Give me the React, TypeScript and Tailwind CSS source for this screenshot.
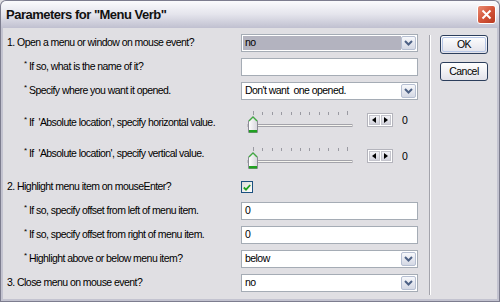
import React from 'react';

const Chevron = () => (
  <svg width="9" height="6" viewBox="0 0 9 6">
    <path d="M1 1 L4.5 4.5 L8 1" stroke="#4d6185" strokeWidth="2" fill="none" />
  </svg>
);

const Select = ({ value, focused }: { value: string; focused?: boolean }) => (
  <div className="w-[177px] h-[18px] border border-[#a5acb5] bg-white flex p-[1px]">
    <div className={`flex-1 flex items-center pl-[2px] whitespace-pre ${focused ? 'bg-[#b3b3bf]' : ''}`}>{value}</div>
    <div className="w-[15px] h-[14px] border border-[#b6bfd2] rounded-[2px] bg-gradient-to-b from-[#f7f8fb] to-[#d4d8e4] flex items-center justify-center">
      <Chevron />
    </div>
  </div>
);

const TextInput = ({ value = '' }: { value?: string }) => (
  <div className="w-[177px] h-[18px] border border-[#a5acb5] bg-white flex items-center pl-[3px]">{value}</div>
);

const Slider = () => {
  const ticks = Array.from({ length: 11 }, (_, i) => 12 + i * 9.4);
  return (
    <div className="flex items-start">
      <svg width="112" height="26" viewBox="0 0 112 26">
        {ticks.map((x, i) => (
          <line
            key={i}
            x1={Math.round(x) + 0.5}
            x2={Math.round(x) + 0.5}
            y1={i === 0 || i === 10 ? 3 : 4}
            y2={7}
            stroke="#9a9aa2"
          />
        ))}
        <rect x="7" y="16.5" width="104" height="2" fill="#f6f5ef" stroke="#a3a3aa" strokeWidth="1" />
        <defs>
          <linearGradient id="thumb" x1="0" y1="0" x2="1" y2="0">
            <stop offset="0" stopColor="#ffffff" />
            <stop offset="1" stopColor="#d6d6dc" />
          </linearGradient>
        </defs>
        <path d="M7.5 13 L12 8.5 L16.5 13 L16.5 24.5 L7.5 24.5 Z" fill="url(#thumb)" stroke="#8c8c96" />
        <path d="M8 13 L12 9 L16 13" fill="none" stroke="#3fae3f" strokeWidth="1.2" />
        <rect x="8" y="22" width="8" height="2.5" fill="#21a121" />
      </svg>
      <div className="ml-[14px] mt-[5px] w-[26px] h-[14px] border border-[#b4b4bc] bg-white flex p-[1px] gap-[1px]">
        <div className="flex-1 bg-gradient-to-b from-[#f2f2f6] to-[#d2d2dc] border border-[#c4c4cc] flex items-center justify-center">
          <svg width="4" height="6" viewBox="0 0 4 6"><path d="M4 0 L0 3 L4 6 Z" fill="#000" /></svg>
        </div>
        <div className="flex-1 bg-gradient-to-b from-[#f2f2f6] to-[#d2d2dc] border border-[#c4c4cc] flex items-center justify-center">
          <svg width="4" height="6" viewBox="0 0 4 6"><path d="M0 0 L4 3 L0 6 Z" fill="#000" /></svg>
        </div>
      </div>
      <span className="ml-[9px] mt-[5px] leading-[14px]">0</span>
    </div>
  );
};

const Sub = ({ children }: { children: React.ReactNode }) => (
  <span className="pl-[21px] whitespace-pre">
    <span className="text-[8px] align-top leading-[10px]">*</span> {children}
  </span>
);

const Check = () => (
  <div className="w-[12px] h-[12px] border border-[#1c5180] bg-gradient-to-br from-[#dcdcd8] to-white flex items-center justify-center">
    <svg width="8" height="7" viewBox="0 0 8 7">
      <path d="M0.8 3.5 L3 5.6 L7.2 1" stroke="#21a121" strokeWidth="1.8" fill="none" />
    </svg>
  </div>
);

const XpButton = ({ label, isDefault }: { label: string; isDefault?: boolean }) => (
  <div className="w-[48px] h-[19px] rounded-[3px] border border-[#2c3e5c] bg-gradient-to-b from-white to-[#e2e2ea] p-[1px]">
    <div
      className={`w-full h-full rounded-[2px] flex items-center justify-center ${
        isDefault ? 'border border-[#b6c6e6]' : ''
      }`}
    >
      {label}
    </div>
  </div>
);

export default function App() {
  return (
    <div className="w-[500px] h-[302px] flex flex-col bg-[#e0dfe3] text-[10.5px] tracking-[-0.55px] text-black font-['Liberation_Sans',Arial,sans-serif] overflow-hidden">
      {/* Title bar */}
      <div className="h-[28px] shrink-0 rounded-t-[6px] border border-b-0 border-[#7d7d8f] bg-gradient-to-b from-[#fbfbfd] via-[#e4e4ec] to-[#c0c0d0] flex items-center justify-between pl-[5px] pr-[3px]">
        <span className="text-[13px] font-bold tracking-[-0.5px] text-[#111]">Parameters for "Menu Verb"</span>
        <div className="w-[19px] h-[19px] rounded-[3px] border border-white bg-gradient-to-br from-[#e88b72] via-[#d4553a] to-[#b8391f] flex items-center justify-center">
          <svg width="11" height="11" viewBox="0 0 11 11">
            <path d="M1.5 1.5 L9.5 9.5 M9.5 1.5 L1.5 9.5" stroke="#fff" strokeWidth="2" />
          </svg>
        </div>
      </div>

      {/* Body */}
      <div className="flex-1 flex border-x border-b border-[#7d7d8f]">
        <div className="flex-1 flex border-x-2 border-b-2 border-[#c3c3d0]">
          {/* Form */}
          <div className="flex flex-col pt-[3px]">
            <div className="h-[24px] flex items-center">
              <span className="w-[238px] pl-[4px]">1. Open a menu or window on mouse event?</span>
              <Select value="no" focused />
            </div>
            <div className="h-[24px] flex items-center">
              <span className="w-[238px]"><Sub>If so, what is the name of it?</Sub></span>
              <TextInput />
            </div>
            <div className="h-[24px] flex items-center">
              <span className="w-[238px]"><Sub>Specify where you want it opened.</Sub></span>
              <Select value="Don't want  one opened." />
            </div>
            <div className="h-[40px] flex items-center">
              <span className="w-[238px]"><Sub>If  'Absolute location', specify horizontal value.</Sub></span>
              <div className="self-start mt-[5px]">
                <Slider />
              </div>
            </div>
            <div className="h-[32px] flex items-start">
              <span className="w-[238px] h-[22px] flex items-center"><Sub>If  'Absolute location', specify vertical value.</Sub></span>
              <div className="mt-[1px]">
                <Slider />
              </div>
            </div>
            <div className="h-[24px] flex items-center">
              <span className="w-[238px] pl-[4px]">2. Highlight menu item on mouseEnter?</span>
              <Check />
            </div>
            <div className="h-[24px] flex items-center">
              <span className="w-[238px]"><Sub>If so, specify offset from left of menu item.</Sub></span>
              <TextInput value="0" />
            </div>
            <div className="h-[24px] flex items-center">
              <span className="w-[238px]"><Sub>If so, specify offset from right of menu item.</Sub></span>
              <TextInput value="0" />
            </div>
            <div className="h-[24px] flex items-center">
              <span className="w-[238px]"><Sub>Highlight above or below menu item?</Sub></span>
              <Select value="below" />
            </div>
            <div className="h-[24px] flex items-center">
              <span className="w-[238px] pl-[4px]">3. Close menu on mouse event?</span>
              <Select value="no" />
            </div>
          </div>

          {/* Separator */}
          <div className="ml-[11px] mt-[7px] w-[2px] h-[260px] border-l border-[#a3a3ab] border-r border-r-white" />

          {/* Buttons */}
          <div className="ml-[9px] pt-[7px] flex flex-col gap-[8px]">
            <XpButton label="OK" isDefault />
            <XpButton label="Cancel" />
          </div>
        </div>
      </div>
    </div>
  );
}
